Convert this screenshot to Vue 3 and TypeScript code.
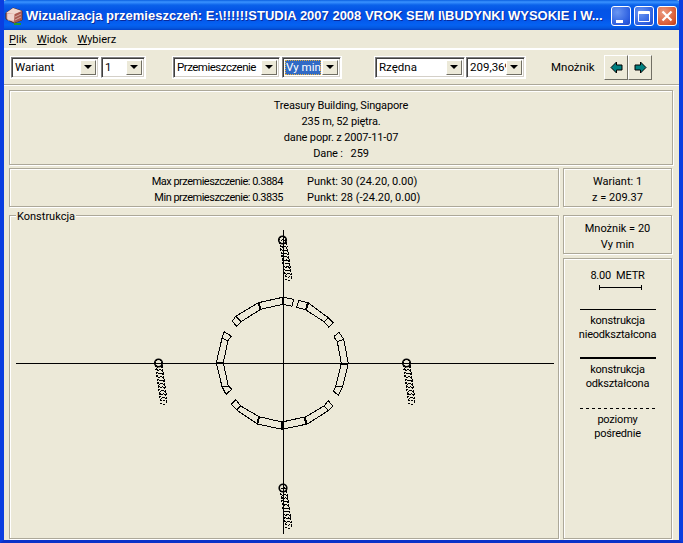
<template>
  <div class="window">
    <!-- pasek tytulu -->
    <div class="titlebar">
      <svg class="app-icon" width="18" height="18" viewBox="0 0 18 18">
        <polygon points="1,6 8,1 17,4 17,13 9,16 1,12" fill="#d89a90" stroke="#4a2a28" />
        <polygon points="8,1 17,4 10,7 1,6" fill="#f0d8d0" />
        <polygon points="10,7 17,4 17,13 9,16" fill="#a85850" />
        <path d="M2 8h7M2 10h7M2 12h7M4 7v7M6 7v7M8 7v7" stroke="#fff" stroke-width="0.7" />
        <path d="M10 10l6-3M10 13l6-3" stroke="#e8c8c0" stroke-width="0.7" />
        <path d="M9 17h7" stroke="#1f9a30" stroke-width="2" />
      </svg>
      <span class="title-text">Wizualizacja przemieszczeń: E:\!!!!!!STUDIA 2007 2008 VROK SEM I\BUDYNKI WYSOKIE I W...</span>
      <div class="caption-buttons">
        <div class="cap-btn">
          <svg width="18" height="18" viewBox="0 0 18 18"><rect x="4" y="13" width="7" height="3" fill="#fff" /></svg>
        </div>
        <div class="cap-btn">
          <svg width="18" height="18" viewBox="0 0 18 18"><path d="M3.5 4.5h11v10h-11z M3.5 5.5h11 M3.5 6.5h11" fill="none" stroke="#fff" /></svg>
        </div>
        <div class="cap-btn close">
          <svg width="18" height="18" viewBox="0 0 18 18"><path d="M4.5 4.5l9 9M13.5 4.5l-9 9" stroke="#fff" stroke-width="2.2" /></svg>
        </div>
      </div>
    </div>

    <div class="menu">
      <span v-for="m in menu" :key="m.rest" class="menu-item"><u>{{ m.key }}</u>{{ m.rest }}</span>
    </div>

    <div class="toolbar">
      <div v-for="c in combos" :key="c.text" class="combo" :class="c.cls">
        <div class="combo-text"><span :class="{ focused: c.focus }">{{ c.text }}</span></div>
        <div class="combo-btn"><i class="arrow"></i></div>
      </div>
      <span class="mnoznik-label">Mnożnik</span>
      <div class="arrows">
        <div class="arrow-btn">
          <svg width="13" height="13" viewBox="0 0 13 13"><polygon points="1,6.5 6.5,1 6.5,4 12,4 12,9 6.5,9 6.5,12" fill="#008080" stroke="#000" /></svg>
        </div>
        <div class="arrow-btn">
          <svg width="13" height="13" viewBox="0 0 13 13"><polygon points="12,6.5 6.5,1 6.5,4 1,4 1,9 6.5,9 6.5,12" fill="#008080" stroke="#000" /></svg>
        </div>
      </div>
    </div>

    <div class="content">
      <div class="panel info">
        <div>Treasury Building, Singapore</div>
        <div>235 m, 52 piętra.</div>
        <div>dane popr. z 2007-11-07</div>
        <div>Dane :&nbsp;&nbsp;&nbsp;259</div>
      </div>

      <div class="columns">
        <div class="panel small">
          <div class="stat"><span>Max przemieszczenie: 0.3884</span><span>Punkt: 30 (24.20, 0.00)</span></div>
          <div class="stat"><span>Min przemieszczenie: 0.3835</span><span>Punkt: 28 (-24.20, 0.00)</span></div>
        </div>
        <div class="panel small">
          <div>Wariant: 1</div>
          <div>z = 209.37</div>
        </div>
      </div>

      <div class="columns grow">
        <div class="panel group">
          <span class="group-label">Konstrukcja</span>
          <svg class="plot" viewBox="10 216 549 322" width="549" height="322" shape-rendering="crispEdges">
            <g fill="none" stroke="#000">
              <line x1="16" y1="363.5" x2="554" y2="363.5" />
              <line x1="283.5" y1="230" x2="283.5" y2="534" />
              <polyline v-for="(p, i) in ringPaths" :key="i" :points="p" />
              <line v-for="(t, i) in edges" :key="'e' + i" :x1="t[0]" :y1="t[1]" :x2="t[2]" :y2="t[3]" />
              <line v-for="(t, i) in thick" :key="'t' + i" :x1="t[0]" :y1="t[1]" :x2="t[2]" :y2="t[3]" stroke-width="2" />
              <circle v-for="(d, i) in columnDots" :key="'c' + i" :cx="d.x" :cy="d.y" r="3.5" stroke-dasharray="2 1.4" />
              <circle v-for="(h, i) in heads" :key="'h' + i" :cx="h[0]" :cy="h[1]" r="3.8" stroke-width="1.6" shape-rendering="auto" />
            </g>
          </svg>
        </div>

        <div class="side">
          <div class="panel small">
            <div>Mnożnik = 20</div>
            <div>Vy min</div>
          </div>
          <div class="panel legend">
            <div class="scale-text">8.00&nbsp;&nbsp;METR</div>
            <div class="scale-bar"></div>
            <div class="line thin"></div>
            <div class="legend-text">konstrukcja<br />nieodkształcona</div>
            <div class="line bold"></div>
            <div class="legend-text">konstrukcja<br />odkształcona</div>
            <div class="line dashed"></div>
            <div class="legend-text">poziomy<br />pośrednie</div>
          </div>
        </div>
      </div>
    </div>
  </div>
</template>

<script setup lang="ts">
const menu = [
  { key: "P", rest: "lik" },
  { key: "W", rest: "idok" },
  { key: "W", rest: "ybierz" },
];

const combos = [
  { text: "Wariant", cls: "c-wariant" },
  { text: "1", cls: "c-one" },
  { text: "Przemieszczenie", cls: "c-przem" },
  { text: "Vy min", cls: "c-vy", focus: true },
  { text: "Rzędna", cls: "c-rzedna" },
  { text: "209,369", cls: "c-val" },
];

// punkty odczytane ze zblizenia (x3, poczatek 200,280)
const ring: number[][][] = [
  [[281, 58], [248, 52], [175, 68], [107, 109], [97, 124], [110, 139], [123, 125], [182, 88], [248, 73], [276, 79], [281, 58]],
  [[296, 61], [324, 68], [385, 113], [400, 129], [387, 142], [372, 125], [318, 90], [290, 82], [296, 61]],
  [[401, 170], [417, 157], [431, 178], [445, 250], [428, 320], [415, 346], [400, 333], [407, 320], [424, 250], [412, 185], [401, 170]],
  [[372, 378], [385, 362], [398, 378], [385, 392], [322, 432], [246, 448], [172, 432], [110, 390], [94, 372], [108, 359], [122, 378], [177, 410], [246, 426], [318, 410], [372, 378]],
  [[72, 155], [94, 168], [84, 182], [70, 248], [85, 318], [95, 328], [78, 343], [66, 320], [49, 248], [66, 175], [72, 155]],
];

const toPage = (x: number, y: number) => [200 + x / 3, 280 + y / 3];

const ringPaths = ring.map((pts) =>
  pts.map(([x, y]) => toPage(x, y).map((v) => v.toFixed(1)).join(",")).join(" ")
);

const mapLines = (list: number[][]) =>
  list.map(([a, b, c, d]) => [...toPage(a, b), ...toPage(c, d)]);

// krawedzie malych prostokatow
const edges = mapLines([
  [107, 109, 123, 125],
  [385, 113, 372, 125],
  [431, 178, 412, 185],
  [428, 320, 407, 320],
  [372, 378, 385, 392],
  [110, 390, 122, 378],
  [66, 175, 84, 182],
  [66, 320, 85, 318],
]);

const thick = mapLines([
  [248, 52, 248, 73],
  [175, 68, 182, 88],
  [324, 68, 318, 90],
  [424, 251, 445, 251],
  [49, 248, 70, 248],
  [246, 426, 246, 448],
  [177, 410, 172, 432],
  [313, 410, 320, 432],
]);

// slupy: glowica i koniec
const columns = [
  { from: [282.5, 240], to: [288.5, 277] },
  { from: [158.5, 363], to: [163.5, 401] },
  { from: [406.5, 363], to: [411.5, 401] },
  { from: [283, 488], to: [288.5, 525] },
];

const heads = columns.map((c) => c.from);

const columnDots = columns.flatMap((c) => {
  const out: { x: number; y: number }[] = [];
  const n = 11;
  for (let i = 0; i <= n; i++) {
    out.push({
      x: c.from[0] + ((c.to[0] - c.from[0]) * i) / n,
      y: c.from[1] + ((c.to[1] - c.from[1]) * i) / n,
    });
  }
  return out;
});
</script>

<style scoped>
.window {
  width: 683px;
  height: 543px;
  box-sizing: border-box;
  display: flex;
  flex-direction: column;
  background: #ece9d8;
  border-left: 4px solid #0a3ee0;
  border-right: 4px solid #0a3ee0;
  border-bottom: 3px solid #0a32c8;
  font-family: Roboto, "Liberation Sans", Arial, sans-serif;
  font-size: 11px;
  color: #000;
  overflow: hidden;
}

.titlebar {
  height: 30px;
  margin: 0 -4px;
  padding: 0 6px 0 5px;
  box-sizing: border-box;
  flex: none;
  display: flex;
  align-items: center;
  gap: 3px;
  background: linear-gradient(
    to bottom,
    #0a5fe0 0,
    #3a93ff 2px,
    #0b62ea 5px,
    #0354e6 10px,
    #0355ea 18px,
    #0562f2 25px,
    #0458e0 28px,
    #0340c8 30px
  );
  border-radius: 7px 7px 0 0;
}

.app-icon {
  flex: none;
  margin-top: 1px;
}

.title-text {
  flex: 1;
  min-width: 0;
  white-space: nowrap;
  color: #fff;
  font-family: "Liberation Sans", Arial, sans-serif;
  font-weight: bold;
  font-size: 13px;
  text-shadow: 1px 1px 0 #0a2a9a;
}

.caption-buttons {
  display: flex;
  gap: 3px;
  flex: none;
  margin-top: 2px;
}

.cap-btn {
  width: 20px;
  height: 20px;
  box-sizing: border-box;
  border: 1px solid #fff;
  border-radius: 3px;
  background: radial-gradient(circle at 30% 30%, #6a96f2, #2c5fe0 70%, #1e48c8);
  display: flex;
  align-items: center;
  justify-content: center;
}

.cap-btn.close {
  background: radial-gradient(circle at 30% 30%, #ec9a80, #d95a32 70%, #b83a18);
}

.menu {
  height: 18px;
  flex: none;
  display: flex;
  align-items: center;
  gap: 10px;
  padding-left: 5px;
}

.toolbar {
  height: 37px;
  box-sizing: border-box;
  flex: none;
  display: flex;
  align-items: center;
  padding-left: 7px;
  border-top: 2px solid #fff;
  border-bottom: 1px solid #aca899;
  box-shadow: 0 1px 0 #fff;
}

.combo {
  height: 21px;
  box-sizing: border-box;
  display: flex;
  background: #fff;
  border: 1px solid;
  border-color: #808080 #fff #fff #808080;
  outline: 1px solid #fff;
  box-shadow: inset 1px 1px 0 #404040, inset -1px -1px 0 #d4d0c8;
  padding: 2px;
}

.combo-text {
  flex: 1;
  min-width: 0;
  overflow: hidden;
  white-space: nowrap;
  line-height: 15px;
  padding-left: 1px;
  font-size: 11.5px;
}

.c-przem .combo-text {
  letter-spacing: -0.5px;
}

.focused {
  display: block;
  background: #316ac5;
  color: #fff;
  outline: 1px dotted #e8b040;
  outline-offset: -1px;
  height: 100%;
  padding-left: 1px;
  margin-left: -1px;
  margin-right: 1px;
}

.combo-btn {
  width: 16px;
  flex: none;
  box-sizing: border-box;
  background: #ece9d8;
  border: 1px solid;
  border-color: #fff #716f64 #716f64 #fff;
  display: flex;
  align-items: center;
  justify-content: center;
}

.arrow {
  width: 0;
  height: 0;
  border-left: 4px solid transparent;
  border-right: 4px solid transparent;
  border-top: 4px solid #000;
}

.c-wariant { width: 88px; margin-right: 2px; }
.c-one { width: 44px; margin-right: 28px; }
.c-przem { width: 107px; margin-right: 2px; }
.c-vy { width: 59px; margin-right: 34px; }
.c-rzedna { width: 90px; margin-right: 1px; }
.c-val { width: 59px; margin-right: 26px; }

.mnoznik-label {
  width: 53px;
  font-size: 11.5px;
}

.arrows {
  display: flex;
}

.arrow-btn {
  width: 24px;
  height: 25px;
  box-sizing: border-box;
  border: 1px solid;
  border-color: #fff #716f64 #716f64 #fff;
  display: flex;
  align-items: center;
  justify-content: center;
}

.content {
  flex: 1;
  min-height: 0;
  display: flex;
  flex-direction: column;
  padding: 5px 5px 0;
  gap: 2px;
}

.panel {
  box-sizing: border-box;
  border: 1px solid #aca899;
  box-shadow: 1px 1px 0 #fff, inset 1px 1px 0 #fff;
  text-align: center;
  margin: 0 1px 1px 0;
}

.info {
  height: 75px;
  padding-top: 7px;
  line-height: 16px;
  letter-spacing: -0.15px;
  flex: none;
}

.columns {
  display: grid;
  grid-template-columns: 551px 110px;
  gap: 3px;
  flex: none;
}

.columns.grow {
  flex: 1;
  min-height: 0;
  margin-top: 5px;
}

.small {
  height: 39px;
  padding-top: 5px;
  line-height: 16px;
}

.stat {
  display: grid;
  grid-template-columns: 273px 1fr;
  column-gap: 24px;
  text-align: left;
}

.stat span:first-child {
  text-align: right;
  letter-spacing: -0.5px;
}

.group {
  position: relative;
  min-height: 0;
}

.group-label {
  position: absolute;
  left: 6px;
  top: -5px;
  background: #ece9d8;
  padding: 0 1px;
  line-height: 12px;
}

.plot {
  display: block;
  margin: 0;
}

.side {
  display: flex;
  flex-direction: column;
  gap: 3px;
  min-height: 0;
}

.legend {
  flex: 1;
  padding-top: 11px;
  line-height: 14px;
  letter-spacing: -0.2px;
}

.scale-text {
  line-height: 12px;
}

.scale-bar {
  width: 43px;
  height: 5px;
  margin: 3px 0 0 35px;
  box-sizing: border-box;
  border-left: 1px solid #000;
  border-right: 1px solid #000;
  background: linear-gradient(#000, #000) center / 100% 1px no-repeat;
}

.line {
  width: 76px;
  margin: 0 auto;
}

.thin {
  margin-top: 19px;
  border-top: 1px solid #000;
}

.bold {
  margin-top: 15px;
  border-top: 2px solid #000;
}

.dashed {
  margin-top: 17px;
  height: 1px;
  background: repeating-linear-gradient(to right, #000 0 3px, transparent 3px 6px);
}

.legend-text {
  margin-top: 4px;
}
</style>

<style>
html,
body {
  margin: 0;
  overflow: hidden;
}
</style>
